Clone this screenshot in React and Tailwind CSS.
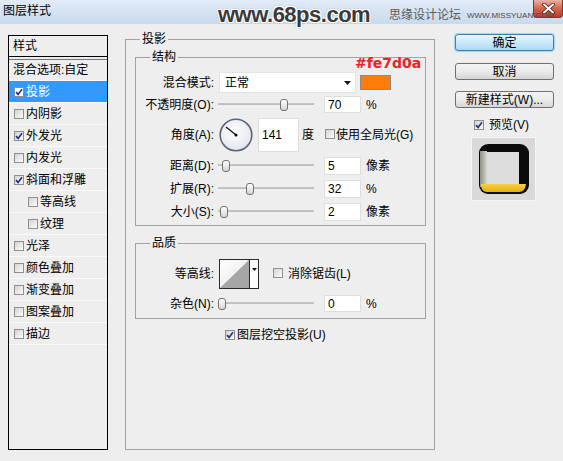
import React from 'react';

const Check = ({ checked, white }) => (
  <span
    className={`inline-flex items-center justify-center w-[10px] h-[10px] shrink-0 border border-[#8e8f8f] ${
      white ? 'bg-white' : 'bg-gradient-to-br from-[#d4d4d4] to-[#fbfbfb]'
    }`}
  >
    {checked && (
      <svg width="8" height="8" viewBox="0 0 8 8">
        <path d="M1 4.2 L3.1 6.4 L7 1.2" fill="none" stroke="#23368a" strokeWidth="1.7" />
      </svg>
    )}
  </span>
);

const styleItems = [
  { label: '投影', checked: true, selected: true },
  { label: '内阴影' },
  { label: '外发光', checked: true },
  { label: '内发光' },
  { label: '斜面和浮雕', checked: true },
  { label: '等高线', indent: true },
  { label: '纹理', indent: true },
  { label: '光泽' },
  { label: '颜色叠加' },
  { label: '渐变叠加' },
  { label: '图案叠加' },
  { label: '描边' },
];

const Group = ({ title, className = '', children }) => (
  <fieldset className={`border border-[#a2a2a2] ${className}`}>
    <legend className="ml-[14px] px-[2px] leading-[16px]">{title}</legend>
    {children}
  </fieldset>
);

const Label = ({ children }) => <span className="w-[77px] shrink-0 text-right">{children}</span>;

const Slider = ({ value }) => (
  <div className="relative ml-[4px] w-[96px] h-full shrink-0">
    <div className="absolute left-0 right-0 top-1/2 -translate-y-1/2 h-[3px] border-t border-[#a4a4a4] border-b border-b-white bg-[#dadada]" />
    <div
      className="absolute top-1/2 -translate-y-1/2 w-[8px] h-[12px] rounded-[3px] border border-[#727272] bg-gradient-to-b from-white to-[#d4d4d4]"
      style={{ left: `${value * 0.88}px` }}
    />
  </div>
);

const Field = ({ value, className = 'ml-[10px] w-[37px]' }) => (
  <div className={`${className} h-full shrink-0 bg-white border border-[#dedede] flex items-center pl-[3px]`}>
    {value}
  </div>
);

const SliderRow = ({ label, value, unit, className = 'mt-[5px] h-[18px]' }) => (
  <div className={`flex items-center ${className}`}>
    <Label>{label}</Label>
    <Slider value={value} />
    <Field value={value} />
    <span className="ml-[5px]">{unit}</span>
  </div>
);

const Button = ({ children, primary, className = '' }) => (
  <div
    className={`h-[17px] w-[99px] flex items-center justify-center rounded-[3px] border leading-none ${
      primary
        ? 'border-[#3c7fb1] bg-gradient-to-b from-[#eaf6fd] to-[#a9daf5] shadow-[0_0_1px_1px_#9fd3f3]'
        : 'border-[#707070] bg-gradient-to-b from-[#f3f3f3] via-[#ebebeb] to-[#d6d6d6]'
    } ${className}`}
  >
    {children}
  </div>
);

export default function App() {
  return (
    <div className="relative w-[563px] h-[461px] overflow-hidden bg-[#eeeeee] text-[12px] text-black font-['Liberation_Sans','Noto_Sans_CJK_SC',sans-serif]">
      {/* title bar */}
      <div className="flex items-start h-[24px] bg-gradient-to-b from-[#e1ebf6] to-[#c9daee]">
        <span className="ml-[3px] mt-[3px] leading-[16px]">图层样式</span>
        <div className="ml-auto w-[30px] h-[18px] rounded-b-[4px] border border-t-0 border-[#80342a] bg-gradient-to-b from-[#eab0a4] via-[#d2634f] to-[#c13a25] flex items-center justify-center">
          <svg width="13" height="11" viewBox="0 0 13 11">
            <path d="M2 1.5 L11 9.5 M11 1.5 L2 9.5" stroke="#4a1a14" strokeWidth="3.6" strokeLinecap="round" />
            <path d="M2 1.5 L11 9.5 M11 1.5 L2 9.5" stroke="#ffffff" strokeWidth="2" strokeLinecap="round" />
          </svg>
        </div>
      </div>

      {/* watermarks */}
      <div className="absolute left-[218px] top-[4px] text-[22px] leading-none font-bold tracking-[-0.5px] text-[#3a3a3a] [text-shadow:-1px_-1px_0_#fff,1px_-1px_0_#fff,-1px_1px_0_#fff,1px_1px_0_#fff,0_0_3px_#888]">
        www.68ps.com
      </div>
      <div className="absolute left-[389px] top-[7px] text-[12px] leading-[16px] text-[#5c5c5c]">思缘设计论坛</div>
      <div className="absolute left-[467px] top-[11px] text-[8px] leading-[10px] text-[#4a4a4a]">WWW.MISSYUAN.COM</div>

      {/* body */}
      <div className="flex items-start pl-[8px]">
        {/* styles list */}
        <div className="mt-[11px] w-[100px] h-[415px] border border-black">
          <div className="h-[21px] border-b border-black pl-[4px] flex items-center">样式</div>
          <div className="h-[3px] border-b border-[#777]" />
          <div className="h-[21px] pl-[4px] flex items-center border-b border-[#fafafa]">混合选项:自定</div>
          {styleItems.map((item) => (
            <div
              key={item.label}
              className={`h-[22px] flex items-center border-b border-[#fafafa] ${
                item.indent ? 'pl-[19px]' : 'pl-[5px]'
              } ${item.selected ? 'bg-[#3399ff] text-white' : ''}`}
            >
              <Check checked={item.checked} white={item.selected} />
              <span className="ml-[2px]">{item.label}</span>
            </div>
          ))}
        </div>

        {/* main panel */}
        <Group title="投影" className="ml-[17px] mt-[7px] w-[310px] h-[419px]">
          <div className="pl-[9px]">
            <Group title="结构" className="mt-[2px] w-[291px]">
              <div className="pl-[1px] pb-[4px]">
                <div className="mt-[7px] h-[21px] flex items-center">
                  <Label>混合模式:</Label>
                  <div className="ml-[5px] w-[137px] h-full bg-white border border-[#e4e4e4] flex items-center pl-[5px]">
                    <span>正常</span>
                    <svg className="ml-auto mr-[4px]" width="7" height="4" viewBox="0 0 7 4">
                      <path d="M0 0 H7 L3.5 4 Z" fill="#111" />
                    </svg>
                  </div>
                  <div className="ml-[4px] w-[31px] h-[15px] bg-[#fe7d0a] border border-[#8a8a8a]" />
                </div>
                <SliderRow label="不透明度(O):" value={70} unit="%" className="mt-[3px] h-[17px]" />
                <div className="mt-[5px] h-[34px] flex items-center">
                  <Label>角度(A):</Label>
                  <svg className="ml-[5px] shrink-0" width="34" height="34" viewBox="0 0 34 34">
                    <defs>
                      <radialGradient id="dialFill" cx="45%" cy="40%" r="60%">
                        <stop offset="0%" stopColor="#ffffff" />
                        <stop offset="100%" stopColor="#e2e6ee" />
                      </radialGradient>
                    </defs>
                    <circle cx="17" cy="17" r="15.8" fill="url(#dialFill)" stroke="#5b6579" strokeWidth="1.6" />
                    <line x1="17" y1="17" x2="7" y2="9" stroke="#111" strokeWidth="1.2" />
                    <circle cx="17" cy="17" r="1.6" fill="#111" />
                  </svg>
                  <Field value="141" className="ml-[5px] w-[41px] h-[18px]" />
                  <span className="ml-[3px]">度</span>
                  <span className="ml-[11px]">
                    <Check />
                  </span>
                  <span className="ml-[1px]">使用全局光(G)</span>
                </div>
                <SliderRow label="距离(D):" value={5} unit="像素" />
                <SliderRow label="扩展(R):" value={32} unit="%" />
                <SliderRow label="大小(S):" value={2} unit="像素" />
              </div>
            </Group>

            <Group title="品质" className="mt-[9px] w-[291px]">
              <div className="pl-[1px] pb-[6px]">
                <div className="mt-[8px] h-[30px] flex items-center">
                  <Label>等高线:</Label>
                  <div className="ml-[5px] w-[40px] h-[30px] border border-[#2b2b2b] bg-white flex shrink-0">
                    <svg width="29" height="28" viewBox="0 0 29 28">
                      <defs>
                        <linearGradient id="contourBg" x1="0" y1="0" x2="1" y2="1">
                          <stop offset="0%" stopColor="#ffffff" />
                          <stop offset="100%" stopColor="#e4e4e4" />
                        </linearGradient>
                      </defs>
                      <rect width="29" height="28" fill="url(#contourBg)" />
                      <path d="M0 28 L29 0 L29 28 Z" fill="#a6a6a6" />
                    </svg>
                    <div className="flex-1 border-l border-[#2b2b2b] flex justify-center pt-[8px]">
                      <svg width="5" height="3" viewBox="0 0 5 3">
                        <path d="M0 0 H5 L2.5 3 Z" fill="#111" />
                      </svg>
                    </div>
                  </div>
                  <span className="ml-[14px]">
                    <Check />
                  </span>
                  <span className="ml-[5px]">消除锯齿(L)</span>
                </div>
                <SliderRow label="杂色(N):" value={0} unit="%" className="mt-[6px] h-[17px]" />
              </div>
            </Group>

            <div className="mt-[9px] h-[14px] pl-[90px] flex items-center">
              <Check checked />
              <span className="ml-[2px]">图层挖空投影(U)</span>
            </div>
          </div>
        </Group>

        {/* right column */}
        <div className="ml-[20px] mt-[10px] w-[99px] flex flex-col">
          <Button primary>确定</Button>
          <Button className="mt-[12px]">取消</Button>
          <Button className="mt-[11px]">新建样式(W)...</Button>
          <div className="mt-[10px] h-[13px] pl-[19px] flex items-center">
            <Check checked />
            <span className="ml-[5px]">预览(V)</span>
          </div>
          <div className="mt-[6px] ml-[16px] w-[65px] h-[64px] bg-[#d9d9d9] border border-[#f6f6f6] flex items-center justify-center">
            <svg width="50" height="50" viewBox="0 0 50 50">
              <defs>
                <linearGradient id="bevelL" x1="0" y1="0" x2="1" y2="0">
                  <stop offset="0%" stopColor="#8e8e84" />
                  <stop offset="100%" stopColor="#d6d6ca" />
                </linearGradient>
                <linearGradient id="yellowBand" x1="0" y1="0" x2="0" y2="1">
                  <stop offset="0%" stopColor="#f7d040" />
                  <stop offset="100%" stopColor="#e6ae10" />
                </linearGradient>
              </defs>
              <rect x="0" y="0" width="50" height="50" rx="9" fill="#0b0b0b" />
              <rect x="1" y="7" width="7" height="36" fill="url(#bevelL)" />
              <rect x="8" y="8" width="32" height="32" fill="#dddddd" />
              <path d="M2 40 H47 Q46 48 40 48 H8 Q2 48 2 40 Z" fill="url(#yellowBand)" />
            </svg>
          </div>
        </div>
      </div>

      {/* colour annotation */}
      <div className="absolute left-[355px] top-[55px] text-[14px] leading-[16px] font-bold text-[#ee2222] font-['DejaVu_Sans',sans-serif]">
        #fe7d0a
      </div>
    </div>
  );
}
